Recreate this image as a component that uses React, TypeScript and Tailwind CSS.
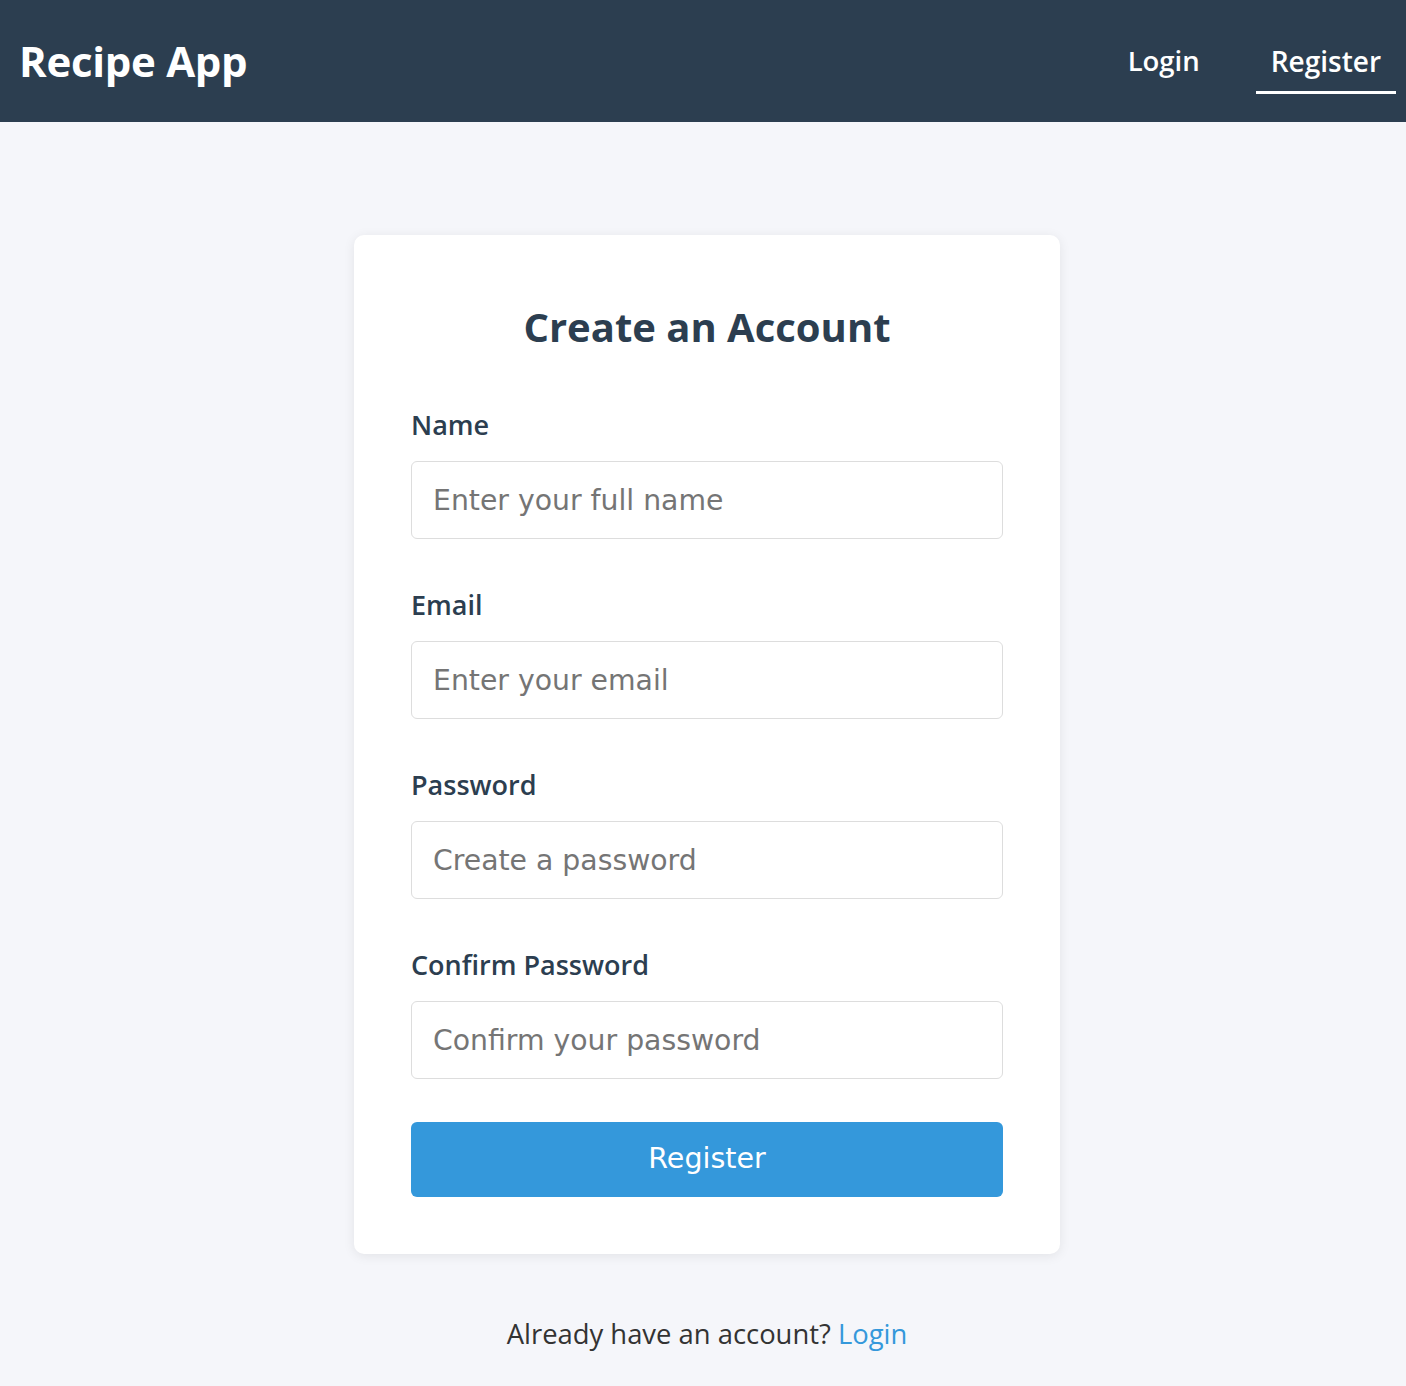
const fields = [
  { id: "name", label: "Name", type: "text", placeholder: "Enter your full name" },
  { id: "email", label: "Email", type: "email", placeholder: "Enter your email" },
  { id: "password", label: "Password", type: "password", placeholder: "Create a password" },
  { id: "confirm", label: "Confirm Password", type: "password", placeholder: "Confirm your password" },
];

const heading = "font-['Open_Sans',sans-serif]";

export default function App() {
  return (
    <div className={`min-h-[1386px] bg-[#f5f6fa] ${heading}`}>
      <header className="flex h-[122px] items-center justify-between bg-[#2c3e50] pl-[19px] pr-[10px] text-white">
        <h1 className="text-[42px] font-bold leading-none tracking-[-0.3px]">Recipe App</h1>
        <nav className="flex items-center gap-[41px] pt-[3px]">
          <a className="border-b-[3px] border-transparent px-[15px] py-[10px] text-[27.5px] font-semibold leading-[40px]">
            Login
          </a>
          <a className="border-b-[3px] border-white px-[15px] py-[10px] text-[28px] font-semibold leading-[40px]">
            Register
          </a>
        </nav>
      </header>

      <main className="flex flex-col items-center pl-[8px] pt-[113px]">
        <form className="w-[706px] rounded-[10px] bg-white px-[57px] pb-[57px] pt-[52px] shadow-[0_2px_12px_rgba(0,0,0,0.08)]">
          <h2 className="mb-[38px] text-center text-[40px] font-bold leading-[80px] text-[#2c3e50]">
            Create an Account
          </h2>
          <div className="flex flex-col gap-[46px]">
            {fields.map((f) => (
              <div key={f.id} className="flex flex-col">
                <label
                  htmlFor={f.id}
                  className="mb-[16px] text-[27px] font-semibold leading-[40px] text-[#2c3e50]"
                >
                  {f.label}
                </label>
                <input
                  id={f.id}
                  type={f.type}
                  placeholder={f.placeholder}
                  className="h-[78px] w-full rounded-[6px] border border-[#dddddd] px-[21px] font-['DejaVu_Sans',sans-serif] text-[28.3px] text-[#333] outline-none placeholder:text-[#757575]"
                />
              </div>
            ))}
          </div>
          <button
            type="button"
            className="mt-[43px] h-[75px] w-full rounded-[6px] bg-[#3498db] font-['DejaVu_Sans',sans-serif] text-[28.5px] text-white"
          >
            Register
          </button>
        </form>

        <p className="mt-[60px] text-[27.4px] leading-[40px] text-[#333]">
          Already have an account? <a className="text-[#3498db]">Login</a>
        </p>
      </main>
    </div>
  );
}
